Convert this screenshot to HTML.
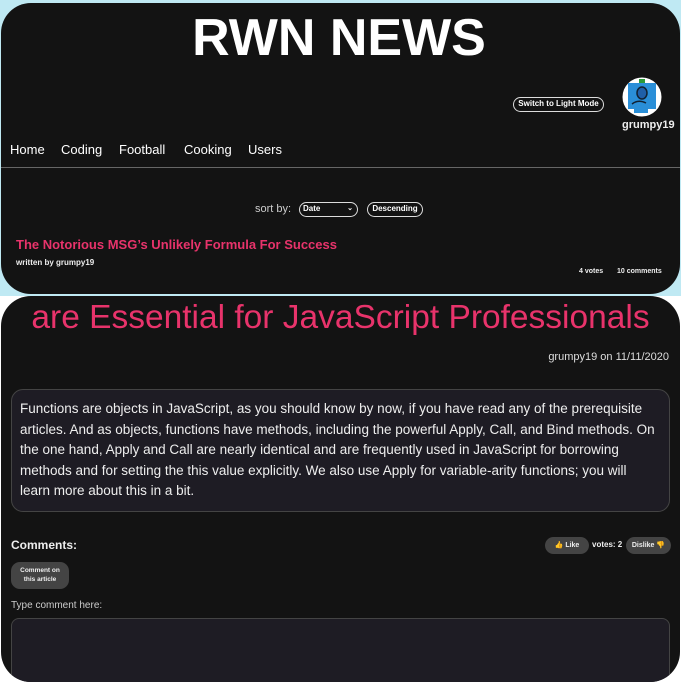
<!DOCTYPE html>
<html><head><meta charset="utf-8"><style>
*{margin:0;padding:0;box-sizing:border-box}
html,body{width:681px;height:682px;overflow:hidden}
body{background:#fff;position:relative;font-family:"Liberation Sans",sans-serif;color:#eee}
.a{position:absolute;white-space:nowrap}
.p1{position:absolute;left:0;top:0;width:681px;height:296px;background:#bfe9f3}
.panel{position:absolute;background:#131313;border-radius:30px}
.btn{position:absolute;border:1.5px solid #ddd;border-radius:8px;font-size:8px;font-weight:bold;color:#fff;text-align:center}
.g{position:absolute;background:#444;border-radius:9px;color:#eee;font-size:7px;font-weight:bold;text-align:center}
.nav{position:absolute;top:142px;font-size:13px;color:#fff}
</style></head><body>
<div class="p1"></div>
<div class="panel" style="left:1px;top:3px;width:679px;height:291px"></div>
<div class="a" style="left:0;width:678px;text-align:center;top:8px;font-size:52px;font-weight:bold;color:#fff">RWN NEWS</div>
<div class="btn" style="left:513px;top:97px;width:91px;height:15px;line-height:12px">Switch to Light Mode</div>
<svg class="a" style="left:622px;top:77px" width="40" height="40" viewBox="0 0 40 40">
<circle cx="20" cy="20" r="19.5" fill="#fff"/>
<rect x="17" y="2" width="6" height="4" fill="#2a9a3a"/>
<rect x="6" y="6" width="28" height="26" fill="#2a8fd8"/>
<ellipse cx="20" cy="16" rx="5" ry="6" fill="#1f5fa8" stroke="#123" stroke-width="1.5"/>
<path d="M10 27 q6-5 14 -1" stroke="#123" stroke-width="1.5" fill="none"/>
<rect x="12" y="32" width="14" height="4" fill="#2a8fd8"/>
</svg>
<div class="a" style="left:622px;top:119px;font-size:11px;font-weight:bold">grumpy19</div>
<div class="nav" style="left:10px">Home</div>
<div class="nav" style="left:61px">Coding</div>
<div class="nav" style="left:119px">Football</div>
<div class="nav" style="left:184px">Cooking</div>
<div class="nav" style="left:248px">Users</div>
<div class="a" style="left:1px;top:167px;width:679px;height:1px;background:#666"></div>
<div class="a" style="left:255px;top:203px;font-size:11px;color:#ccc">sort by:</div>
<div class="btn" style="left:299px;top:202px;width:59px;height:15px;line-height:12px;text-align:left;padding-left:3px">Date<span style="position:absolute;right:4px;font-size:7px">&#8964;</span></div>
<div class="btn" style="left:367px;top:202px;width:56px;height:15px;line-height:12px">Descending</div>
<div class="a" style="left:16px;top:237px;font-size:13px;font-weight:bold;color:#e8336b">The Notorious MSG’s Unlikely Formula For Success</div>
<div class="a" style="left:16px;top:258px;font-size:8px;font-weight:bold">written by grumpy19</div>
<div class="a" style="left:579px;top:268px;font-size:7px;font-weight:bold">4 votes</div>
<div class="a" style="left:617px;top:268px;font-size:7px;font-weight:bold">10 comments</div>

<div class="panel" style="left:1px;top:296px;width:679px;height:386px;overflow:hidden">
<div class="a" style="left:10px;top:322px;width:659px;height:80px;background:#1e1c24;border:1px solid #444;border-radius:8px"></div>
</div>
<div class="a" style="left:0;width:681px;text-align:center;top:299px;font-size:33.5px;color:#e8336b">are Essential for JavaScript Professionals</div>
<div class="a" style="right:12px;top:351px;font-size:11px;color:#ddd">grumpy19 on 11/11/2020</div>
<div class="a" style="left:11px;top:389px;width:659px;height:123px;background:#1e1c24;border:1px solid #444;border-radius:12px;padding:9px 8px 0 8px;font-size:13.5px;line-height:20.6px;color:#eee">Functions are objects in JavaScript, as you should know by now, if you have read any of the prerequisite<br>articles. And as objects, functions have methods, including the powerful Apply, Call, and Bind methods. On<br>the one hand, Apply and Call are nearly identical and are frequently used in JavaScript for borrowing<br>methods and for setting the this value explicitly. We also use Apply for variable-arity functions; you will<br>learn more about this in a bit.</div>
<div class="a" style="left:11px;top:538px;font-size:12px;font-weight:bold">Comments:</div>
<div class="g" style="left:545px;top:537px;width:44px;height:17px;line-height:17px"><span style="color:#f5b800">&#128077;</span> Like</div>
<div class="a" style="left:592px;top:540px;font-size:8px;font-weight:bold">votes: 2</div>
<div class="g" style="left:626px;top:537px;width:45px;height:17px;line-height:17px">Dislike <span style="color:#f5b800">&#128078;</span></div>
<div class="g" style="left:11px;top:562px;width:58px;height:27px;line-height:9px;padding-top:4px;font-size:6.5px">Comment on<br>this article</div>
<div class="a" style="left:11px;top:600px;font-size:10px;color:#ccc">Type comment here:</div>
</body></html>
